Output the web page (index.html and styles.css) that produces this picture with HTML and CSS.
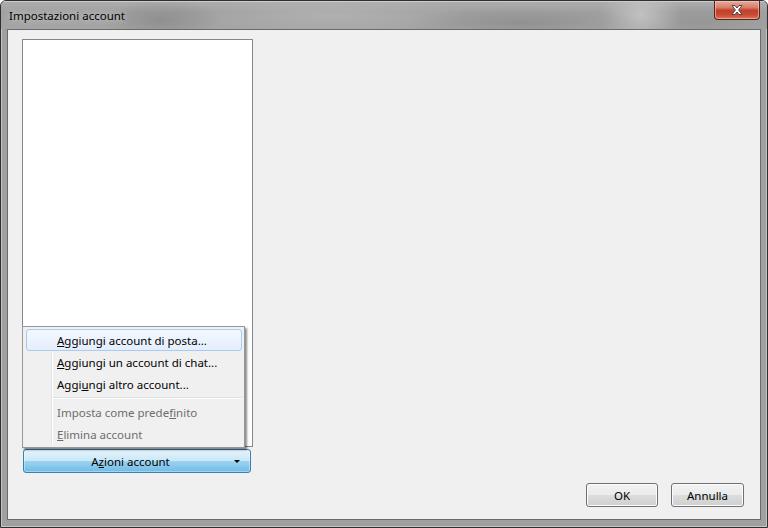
FILE: index.html
```html
<!DOCTYPE html>
<html lang="it">
<head>
<meta charset="utf-8">
<title>Impostazioni account</title>
<link rel="stylesheet" href="styles.css">
</head>
<body>
<div class="window">
  <div class="titlebar">
    <span class="title">Impostazioni account</span>
    <div class="close">
      <svg width="18" height="12" viewBox="0 0 18 12">
        <path d="M4 1.5 L7 1.5 L9 4 L11 1.5 L14 1.5 L10.6 6 L14 10.5 L11 10.5 L9 8 L7 10.5 L4 10.5 L7.4 6 Z" fill="#ffffff" stroke="#4a4a4a" stroke-width="1" stroke-linejoin="round"/>
      </svg>
    </div>
  </div>
  <div class="client">
    <div class="left">
      <div class="list"></div>
      <button class="btn btn-actions"><span class="btn-label">A<u>z</u>ioni account</span><span class="arrow"></span></button>
    </div>
    <div class="footer">
      <button class="btn btn-std">OK</button>
      <button class="btn btn-std">Annulla</button>
    </div>
    <div class="menu">
      <div class="item hot"><u>A</u>ggiungi account di posta...</div>
      <div class="item"><u>A</u>ggiungi un account di chat...</div>
      <div class="item">Aggi<u>u</u>ngi altro account...</div>
      <div class="sep"></div>
      <div class="item disabled">Imposta come prede<u>f</u>inito</div>
      <div class="item disabled"><u>E</u>limina account</div>
    </div>
  </div>
</div>
</body>
</html>
```

FILE: styles.css
```css
html, body {
  margin: 0;
  padding: 0;
  background: #ffffff;
}

body {
  font-family: "Noto Sans", "Liberation Sans", sans-serif;
  font-size: 11.5px;
  color: #000;
}

.window {
  width: 768px;
  height: 528px;
  box-sizing: border-box;
  border: 1px solid #2f2f2f;
  border-radius: 6px 6px 0 0;
  background: #a0a0a0;
  box-shadow: inset 0 0 0 1px #c4c4c4;
  padding: 0 6px 7px 6px;
  display: flex;
  flex-direction: column;
  overflow: hidden;
}

.titlebar {
  height: 28px;
  flex: none;
  display: flex;
  align-items: flex-start;
  justify-content: space-between;
  margin: 0 -6px;
  padding: 0 7px 0 8px;
  background:
    radial-gradient(ellipse 60px 22px at 160px 20px, rgba(120,120,120,0.45), rgba(120,120,120,0) 100%),
    radial-gradient(ellipse 140px 18px at 330px 14px, rgba(210,210,210,0.3), rgba(210,210,210,0) 100%),
    radial-gradient(ellipse 120px 16px at 520px 22px, rgba(110,110,110,0.35), rgba(110,110,110,0) 100%),
    radial-gradient(ellipse 40px 30px at 640px 14px, rgba(215,215,215,0.6), rgba(215,215,215,0) 100%),
    radial-gradient(ellipse 90px 20px at 700px 22px, rgba(120,120,120,0.3), rgba(120,120,120,0) 100%),
    linear-gradient(#aeaeae, #a1a1a1 40%, #a5a5a5);
  box-shadow: inset 0 1px 0 #cccccc;
}

.title {
  margin-top: 7px;
  font-size: 11.5px;
  color: #000;
  text-shadow: 0 0 6px rgba(255,255,255,0.7);
}

.close {
  width: 46px;
  height: 19px;
  box-sizing: border-box;
  margin-top: 0;
  border: 1px solid #5c2419;
  border-top: none;
  border-radius: 0 0 4px 4px;
  background: linear-gradient(#e9a99b 0%, #d9806c 35%, #c0402b 52%, #c84a33 75%, #dc7356 100%);
  box-shadow: inset 0 0 0 1px rgba(255,210,200,0.55);
  display: flex;
  align-items: center;
  justify-content: center;
}

.close svg {
  display: block;
}

.client {
  flex: 1;
  position: relative;
  border: 1px solid #6a6a6a;
  background: #f0f0f0;
  display: flex;
  flex-direction: column;
  padding: 9px 16px 11px 14px;
}

.left {
  width: 231px;
  display: flex;
  flex-direction: column;
}

.list {
  height: 408px;
  box-sizing: border-box;
  border: 1px solid #828790;
  background: #ffffff;
}

.btn {
  font-family: "Noto Sans", "Liberation Sans", sans-serif;
  font-size: 11.5px;
  color: #000;
  box-sizing: border-box;
  height: 24px;
  border-radius: 3px;
  padding: 0;
  margin: 0;
}

.btn-actions {
  margin: 2px 0 0 1px;
  width: 228px;
  border: 1px solid #3c7fb1;
  background: linear-gradient(#e5f4fc 0%, #c9e8f8 48%, #9ed4f1 50%, #6fbbe6 100%);
  box-shadow: inset 0 0 0 1px rgba(255,255,255,0.35);
  position: relative;
  display: flex;
  align-items: center;
  justify-content: center;
}

.btn-label {
  margin-right: 13px;
}

.arrow {
  position: absolute;
  right: 10px;
  top: 10px;
  width: 0;
  height: 0;
  border-left: 3px solid transparent;
  border-right: 3px solid transparent;
  border-top: 3px solid #000;
}

.footer {
  margin-top: 10px;
  display: flex;
  justify-content: flex-end;
  gap: 13px;
}

.btn-std {
  border: 1px solid #707070;
  background: linear-gradient(#f2f2f2 0%, #ebebeb 48%, #dddddd 50%, #cfcfcf 100%);
  box-shadow: inset 0 0 0 1px #fcfcfc;
}

.btn-std:first-child {
  width: 72px;
}

.btn-std:last-child {
  width: 73px;
}

.menu {
  position: absolute;
  left: 14px;
  top: 296px;
  width: 223px;
  box-sizing: border-box;
  border: 1px solid #979797;
  background: #f0f0f0;
  padding: 2px 2px 2px 3px;
  box-shadow: 2px 2px 2px rgba(0,0,0,0.45);
}

.menu::before {
  content: "";
  position: absolute;
  left: 28px;
  top: 2px;
  bottom: 2px;
  width: 1px;
  background: #e2e3e3;
  box-shadow: 1px 0 0 #ffffff;
}

.item {
  position: relative;
  height: 22px;
  box-sizing: border-box;
  border: 1px solid transparent;
  border-radius: 3px;
  padding-left: 30px;
  line-height: 21px;
  white-space: nowrap;
}

.item.hot {
  border-color: #a8cbf2;
  background: linear-gradient(#f3f8fe, #e4eefb);
}

.item.disabled {
  color: #6d6d6d;
}

.sep {
  height: 6px;
  margin-left: 27px;
  position: relative;
}

.sep::after {
  content: "";
  position: absolute;
  left: 0;
  right: 0;
  top: 2px;
  height: 1px;
  background: #e0e0e0;
  box-shadow: 0 1px 0 #ffffff;
}
```
